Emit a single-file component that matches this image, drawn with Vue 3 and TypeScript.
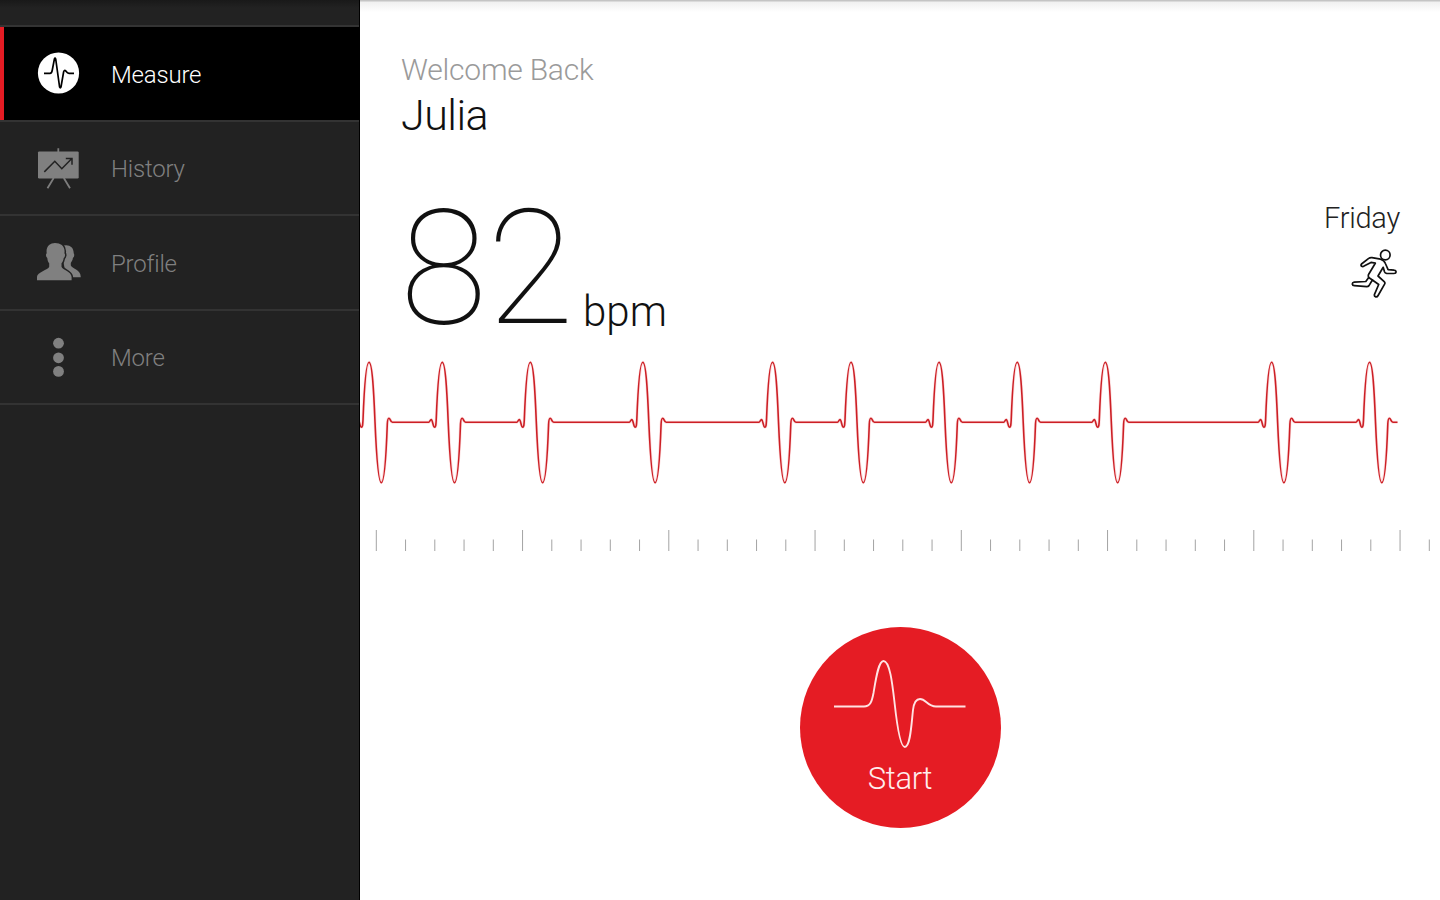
<script setup lang="ts">
interface Item {
  id: 'measure' | 'history' | 'profile' | 'more'
  label: string
}

const items: Item[] = [
  { id: 'measure', label: 'Measure' },
  { id: 'history', label: 'History' },
  { id: 'profile', label: 'Profile' },
  { id: 'more', label: 'More' },
]
const active = 'measure'

// Horizontal position of each beat's peak, in chart units
const beats: number[] = [9, 82.2, 170.3, 282.8, 412.5, 491, 579, 657.2, 745.3, 911.6, 1009.5]

const beatPath = (x: number): string =>
  `H${x - 13.5} C${x - 12.5} 62.2 ${x - 12} 59.6 ${x - 11} 59.6 C${x - 9.6} 59.6 ${x - 9.2} 67.2 ${x - 7.6} 67.2 ` +
  `C${x - 6.4} 67.2 ${x - 6.3} 65 ${x - 6} 60 C${x - 4.8} 28 ${x - 2.8} 2.2 ${x} 2.2 C${x + 3.2} 2.2 ${x + 4.8} 32 ${x + 6} 62 ` +
  `C${x + 7.4} 95 ${x + 9.6} 122.7 ${x + 12.3} 122.7 C${x + 15.2} 122.7 ${x + 17.2} 95 ${x + 18.3} 64 ` +
  `C${x + 18.5} 59.5 ${x + 18.9} 58.2 ${x + 19.9} 58.2 C${x + 21.4} 58.2 ${x + 21.2} 62.2 ${x + 23.4} 62.2`

const ecg = 'M-10 62.2 ' + beats.map(beatPath).join(' ') + ' H1037.5'

const ticks = Array.from({ length: 37 }, (_, i) => ({
  x: 16.3 + i * 29.25,
  top: i % 5 === 0 ? 0 : 9.5,
}))
</script>

<template>
  <div class="screen">
    <aside class="sidebar">
      <nav>
        <a v-for="item in items" :key="item.id" class="item" :class="{ active: item.id === active }">
          <svg v-if="item.id === 'measure'" class="icon" viewBox="0 0 48 48">
            <circle cx="24.5" cy="24" r="20.6" fill="#fff" />
            <path d="M10 24.3H16Q17.8 24.3 18.3 21L20.4 10Q21 8.3 21.7 10L25.6 38Q26.3 39.8 27 38L29.6 23Q30.2 20.4 32 22.2Q33.4 24.3 35 24.3H40" fill="none" stroke="#000" stroke-width="1.7" />
          </svg>
          <svg v-else-if="item.id === 'history'" class="icon" viewBox="0 0 48 48">
            <path d="M24.3 4.2V8M19.7 34L13.5 44.3M29.8 34L36 44.3" stroke="#7d7d7d" stroke-width="1.8" />
            <rect x="4" y="7.4" width="40.7" height="27" rx="1.2" fill="#808080" />
            <path d="M10.3 27.9L20.8 17.3L27.8 24.7L37.6 14.7M31.8 14.4H38V20.7" fill="none" stroke="#222" stroke-width="1.5" />
          </svg>
          <svg v-else-if="item.id === 'profile'" class="icon lowered" viewBox="0 0 48 48">
            <path d="M27 7.6C33.5 4.3 40 7.4 39.7 14.3C40.5 15 40.5 18.1 38.9 18.9C38.7 21.4 37.3 22.6 36.8 24V26.6C38.7 30 46.7 31.2 46.7 37.4V38.3H32Z" fill="#808080" />
            <path d="M3 41.2V38C3 32.8 14.3 31 15.2 27.7V24.2C14 23 13.5 21.3 13.3 19C11.8 18 11.6 15.1 12.7 14.2C11.7 7.5 16 4 21 4C27.1 4 31.5 7.5 30.4 14.2C31.5 15.2 31.1 18.1 29.7 19C29.4 21.3 28.7 23 27.5 24.2V27.7C28.6 31 37.6 32.5 37.6 38V41.2Z" fill="#808080" stroke="#222" stroke-width="3" paint-order="stroke" />
          </svg>
          <svg v-else class="icon lowered" viewBox="0 0 48 48">
            <circle cx="24.5" cy="9.2" r="5.4" fill="#808080" />
            <circle cx="24.5" cy="23.8" r="5.4" fill="#808080" />
            <circle cx="24.5" cy="37.4" r="5.4" fill="#808080" />
          </svg>
          <span class="label">{{ item.label }}</span>
        </a>
      </nav>
    </aside>

    <main class="main">
      <header class="greeting">
        <div class="welcome">Welcome Back</div>
        <div class="name">Julia</div>
      </header>

      <section class="reading">
        <div class="rate"><span class="value">82</span><span class="unit">bpm</span></div>
        <div class="day">
          <span class="dayname">Friday</span>
          <svg class="runner" viewBox="0 0 48 50">
            <g fill="none" stroke="#111" stroke-width="1.7" stroke-linejoin="round" stroke-linecap="round">
              <circle cx="35.3" cy="7" r="4.8" />
              <path d="M30.5 11.2L22 9.6Q20 9.3 18.7 10.4L11.5 16Q10.5 17.3 11.7 18.3Q12.8 19 14 18.1L21 14.4L25.3 15.2L18.7 26.2Q17.9 27.8 18.7 29.5L15.8 33.5L4.2 34.2Q2.2 34.6 2.3 36.1Q2.5 37.6 4.3 37.7L16.8 38.6Q18.2 38.6 19 37.6L22.4 32L28.7 36.5L24.5 46.3Q24 48.2 25.5 48.8Q27.2 49.2 28.1 47.5L34.6 36.2Q35.4 34.7 34.2 33.6L28 28L33.2 19.3L34.5 23.7Q35 25.2 36.6 25.3L43.8 25.5Q46 25.5 46.1 23.8Q46 22.2 44 22.1L38.1 21.6L35.4 15.5Q34.4 12.5 30.5 11.2Z" />
              <path d="M18.7 29.5L22.4 32" />
            </g>
          </svg>
        </div>
      </section>

      <svg class="ecg" viewBox="0 0 1080 126">
        <path :d="ecg" fill="none" stroke="#f9c4c6" stroke-width="3" opacity="0.55" />
        <path :d="ecg" fill="none" stroke="#cc1f25" stroke-width="1.6" />
      </svg>

      <svg class="scale" viewBox="0 0 1080 21">
        <line v-for="t in ticks" :key="t.x" :x1="t.x" :x2="t.x" :y1="t.top" y2="21" stroke="#a3a3a3" stroke-width="1" />
      </svg>

      <button class="start" type="button">
        <svg class="pulse" viewBox="0 0 134 92">
          <path d="M1 48.5H31C37 48.5 38.7 44.5 40.5 35C43 20 45.5 3 50.5 3C57 3 59.5 27 61.7 46C64 67 67.5 89 71.8 89C77.5 89 78.5 65 80 52C81 43.5 83.5 41 87 41C93 41 94.5 48.5 103 48.5H132.5" fill="none" stroke="#ffe3e3" stroke-width="1.9" />
        </svg>
        <span>Start</span>
      </button>
    </main>
  </div>
</template>

<style>
body {
  margin: 0;
  overflow: hidden;
}
</style>

<style scoped>
.screen {
  display: flex;
  width: 1440px;
  height: 900px;
  font-family: Roboto, 'Liberation Sans', sans-serif;
  font-weight: 300;
  background: #fff;
}
.sidebar {
  box-sizing: border-box;
  width: 360px;
  flex: none;
  padding-top: 25px;
  border-right: 1px solid #000;
  background: linear-gradient(#191919, #222 8px);
}
nav {
  border-top: 2px solid #343434;
}
.item {
  box-sizing: border-box;
  display: flex;
  align-items: center;
  height: 94.5px;
  padding-left: 34px;
  border-bottom: 2px solid #333;
  color: #808080;
}
.item.active {
  background: #000;
  box-shadow: inset 4px 0 #e51c24;
  color: #fff;
}
.icon {
  width: 48px;
  height: 48px;
  flex: none;
}
.icon.lowered {
  margin-top: 2px;
}
.label {
  margin-left: 29px;
  padding-top: 3px;
  font-size: 24px;
  line-height: 32px;
  letter-spacing: -0.2px;
}
.main {
  display: flex;
  flex: 1;
  flex-direction: column;
  min-width: 0;
  background: linear-gradient(#c4c4c4, #c4c4c4 1px, #f0f0f0 2px, #fff 12px);
}
.greeting {
  height: 150px;
  padding: 52px 0 0 41px;
  box-sizing: border-box;
}
.welcome {
  font-size: 30px;
  line-height: 36px;
  letter-spacing: -0.22px;
  color: #9a9a9a;
}
.name {
  margin-top: 2px;
  font-size: 43px;
  line-height: 50px;
  letter-spacing: -0.5px;
  color: #111;
}
.reading {
  display: flex;
  justify-content: space-between;
  height: 210px;
  padding: 0 40px;
}
.rate {
  display: flex;
  align-items: baseline;
  height: 190px;
  padding-top: 25px;
  box-sizing: border-box;
  color: #111;
}
.value {
  font-size: 159px;
  line-height: 188px;
  font-weight: 100;
}
.unit {
  position: relative;
  top: 3px;
  margin-left: 9px;
  font-size: 42px;
}
.day {
  display: flex;
  flex-direction: column;
  align-items: flex-end;
  padding-top: 51px;
  color: #222;
}
.dayname {
  font-size: 29px;
  line-height: 34px;
  letter-spacing: -0.25px;
}
.runner {
  width: 48px;
  height: 50px;
  margin: 13px 2px 0 0;
}
.ecg {
  display: block;
  width: 1080px;
  height: 126px;
  flex: none;
}
.scale {
  display: block;
  width: 1080px;
  height: 21px;
  flex: none;
  margin-top: 43.5px;
}
.start {
  display: flex;
  flex: none;
  flex-direction: column;
  align-items: center;
  align-self: center;
  box-sizing: border-box;
  width: 201px;
  height: 201px;
  margin-top: 76.5px;
  padding: 31px 0 0;
  border: 0;
  border-radius: 50%;
  background: #e51c24;
  color: #ffeded;
  font: 300 31px/38px Roboto, 'Liberation Sans', sans-serif;
  letter-spacing: -0.35px;
}
.pulse {
  width: 134px;
  height: 92px;
  margin-bottom: 10px;
}
</style>
